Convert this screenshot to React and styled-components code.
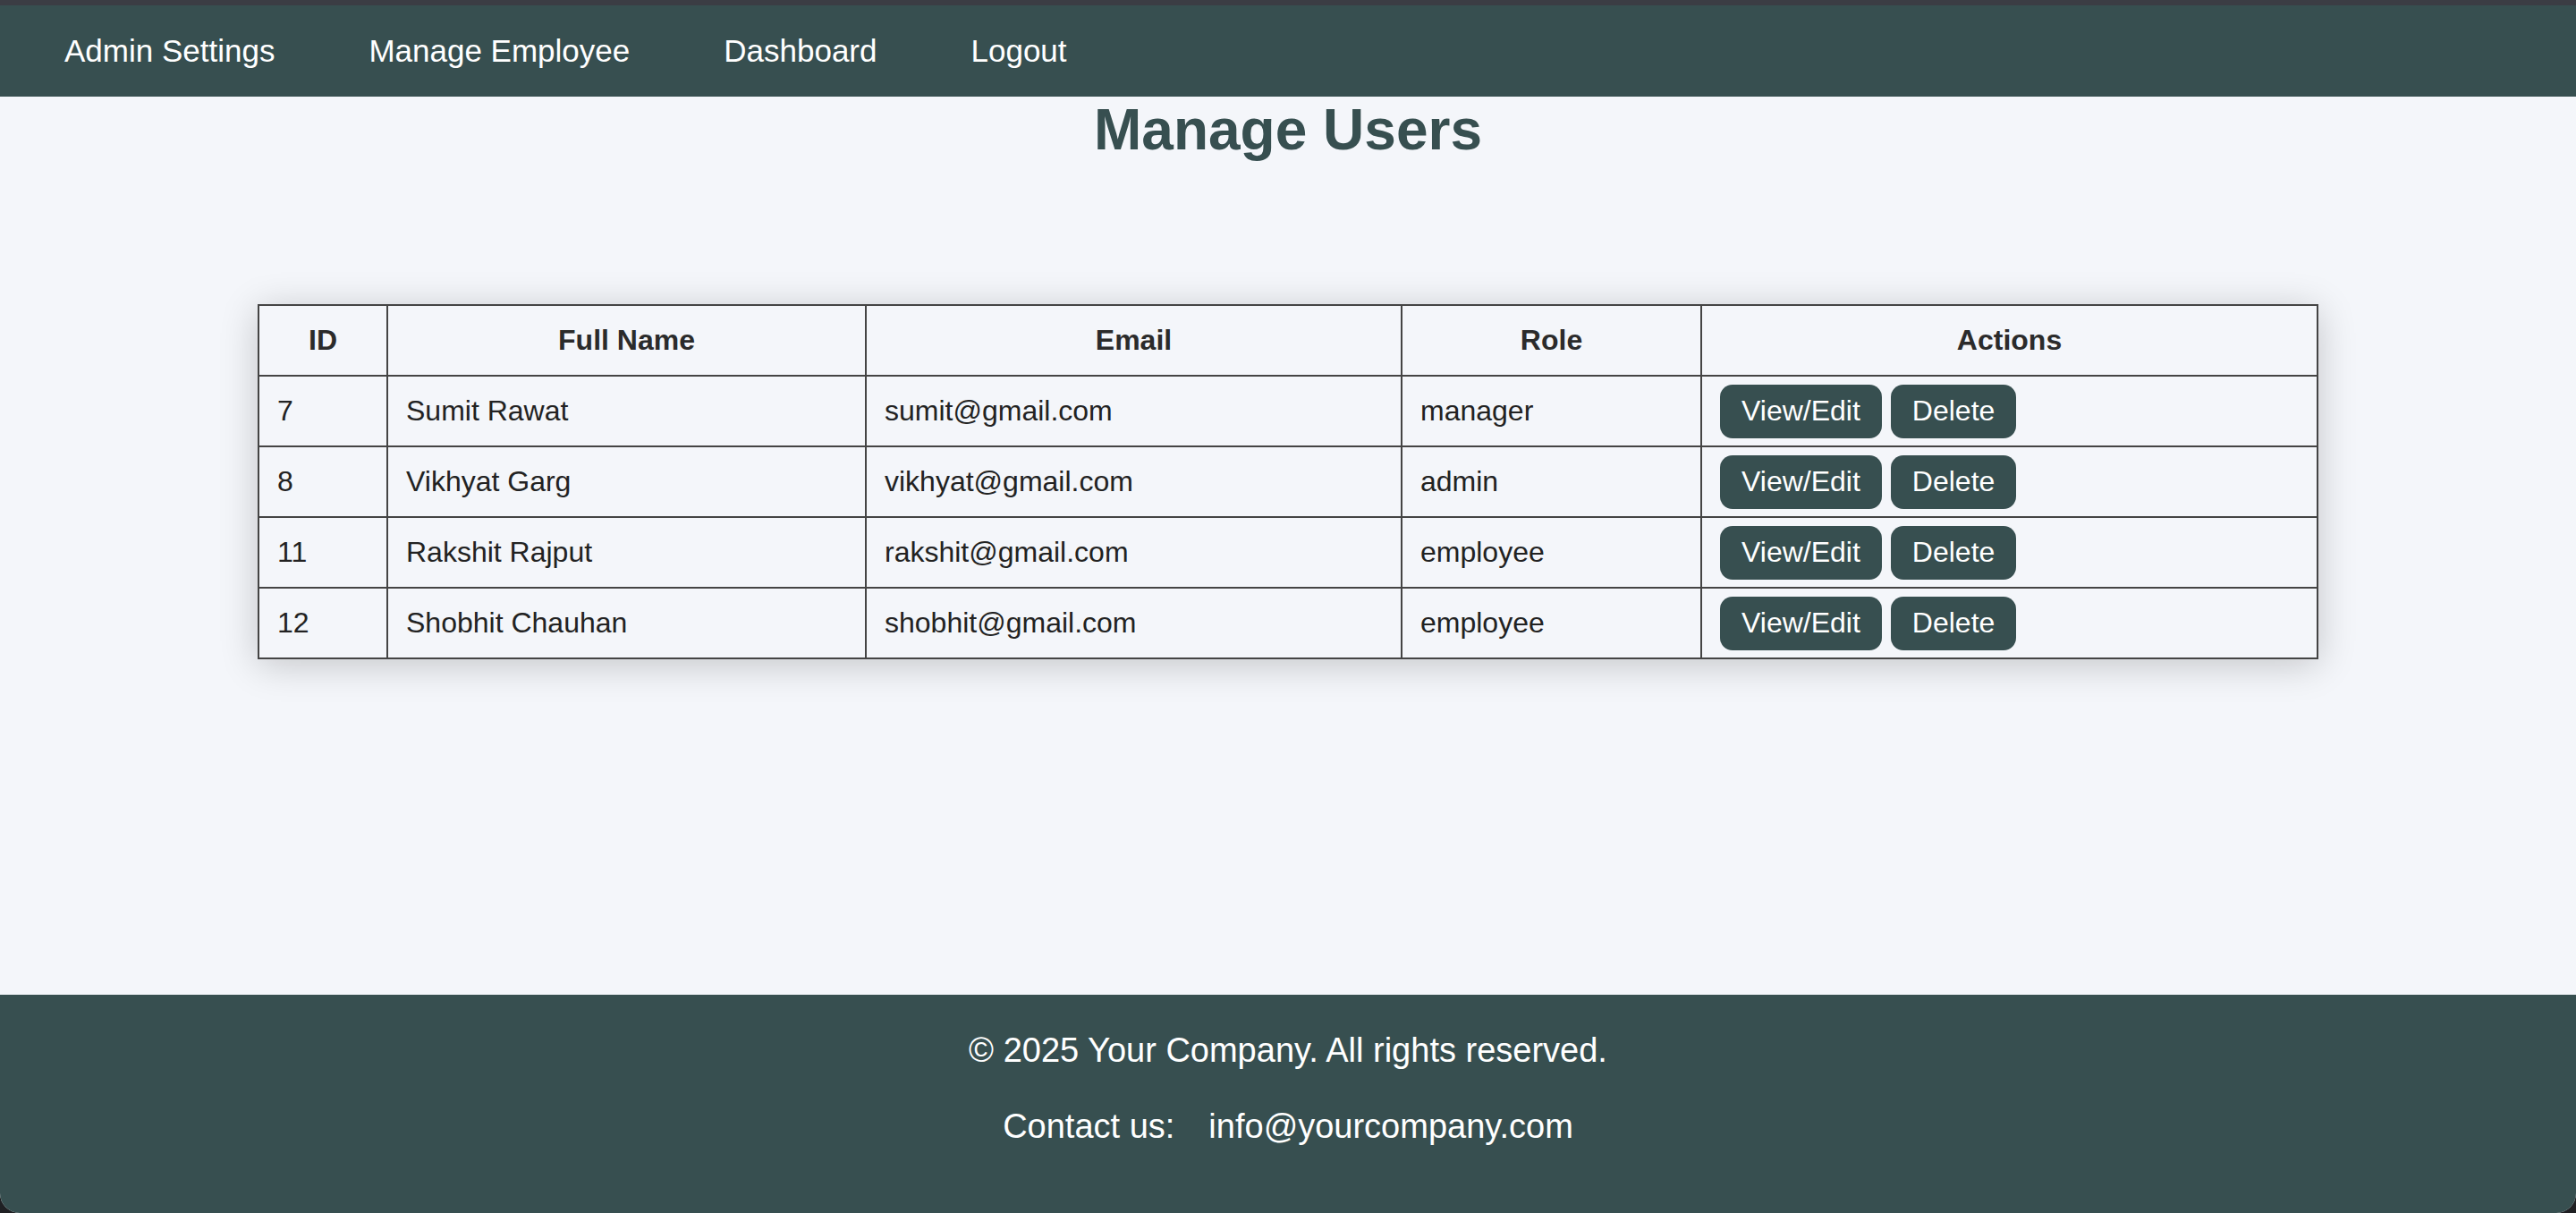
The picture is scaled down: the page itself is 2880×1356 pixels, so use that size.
import React from 'react';
import styled, { createGlobalStyle } from 'styled-components';

const users = [
  { id: 7, name: 'Sumit Rawat', email: 'sumit@gmail.com', role: 'manager' },
  { id: 8, name: 'Vikhyat Garg', email: 'vikhyat@gmail.com', role: 'admin' },
  { id: 11, name: 'Rakshit Rajput', email: 'rakshit@gmail.com', role: 'employee' },
  { id: 12, name: 'Shobhit Chauhan', email: 'shobhit@gmail.com', role: 'employee' }
];

// widths are the content box, cell padding + border come on top
const columns = [
  { label: 'ID', width: 102 },
  { label: 'Full Name', width: 493 },
  { label: 'Email', width: 557 },
  { label: 'Role', width: 293 },
  { label: 'Actions', width: 647 }
];

const navItems = ['Admin Settings', 'Manage Employee', 'Dashboard', 'Logout'];

const App = () => (
  <>
    <GlobalStyle />
    <Frame>
      <Nav>
        {navItems.map(item => (
          <NavLink key={item} href="#">
            {item}
          </NavLink>
        ))}
      </Nav>
      <Main>
        <Title>Manage Users</Title>
        <Table>
          <thead>
            <tr>
              {columns.map(col => (
                <Th key={col.label} width={col.width}>
                  {col.label}
                </Th>
              ))}
            </tr>
          </thead>
          <tbody>
            {users.map(user => (
              <tr key={user.id}>
                <Td>{user.id}</Td>
                <Td>{user.name}</Td>
                <Td>{user.email}</Td>
                <Td>{user.role}</Td>
                <ActionCell>
                  <Actions>
                    <Button>View/Edit</Button>
                    <Button>Delete</Button>
                  </Actions>
                </ActionCell>
              </tr>
            ))}
          </tbody>
        </Table>
      </Main>
      <Footer>
        <FooterLine>© 2025 Your Company. All rights reserved.</FooterLine>
        <FooterLine spaced>
          Contact us:<Mail>info@yourcompany.com</Mail>
        </FooterLine>
      </Footer>
    </Frame>
  </>
);

export default App;

const teal = '#374f50';

const GlobalStyle = createGlobalStyle`
  body {
    margin: 0;
    background: #1f2023;
    font-family: "Liberation Sans", Arial, sans-serif;
  }
`;

const Frame = styled.div`
  box-sizing: border-box;
  min-height: 100vh;
  display: flex;
  flex-direction: column;
  background: #f4f6fa;
  border-top: 6px solid #3b3d44;
  border-radius: 0 0 22px 22px;
  overflow: hidden;
`;

const Nav = styled.nav`
  display: flex;
  align-items: center;
  gap: 105px;
  height: 102px;
  padding: 0 72px;
  background: ${teal};
`;

const NavLink = styled.a`
  color: #fff;
  font-size: 35px;
  text-decoration: none;
`;

const Main = styled.main`
  flex: 1;
`;

const Title = styled.h1`
  margin: 0;
  text-align: center;
  font-size: 64px;
  line-height: 74px;
  font-weight: bold;
  color: ${teal};
`;

const Table = styled.table`
  width: 2304px;
  margin: 158px auto 0;
  table-layout: fixed;
  border-collapse: collapse;
  box-shadow: 0 6px 40px rgba(0, 0, 0, 0.2);
`;

const Th = styled.th`
  width: ${props => props.width}px;
  padding: 20px;
  border: 2px solid #444;
  font-size: 32px;
  line-height: 37px;
  font-weight: bold;
  color: #2b2b2b;
  text-align: center;
`;

const Td = styled.td`
  padding: 20px;
  border: 2px solid #444;
  font-size: 32px;
  line-height: 37px;
  color: #222;
  text-align: left;
`;

const ActionCell = styled(Td)`
  padding: 0 20px;
`;

const Actions = styled.div`
  display: flex;
  gap: 10px;
`;

const Button = styled.button`
  height: 60px;
  padding: 0 24px;
  border: none;
  border-radius: 14px;
  background: ${teal};
  color: #fff;
  font-family: inherit;
  font-size: 32px;
  cursor: pointer;
`;

const Footer = styled.footer`
  padding: 40px 0 75px;
  background: ${teal};
  color: #fff;
  text-align: center;
`;

const FooterLine = styled.p`
  margin: ${props => (props.spaced ? '41px 0 0' : '0')};
  font-size: 38px;
  line-height: 44px;
`;

const Mail = styled.span`
  margin-left: 38px;
`;
